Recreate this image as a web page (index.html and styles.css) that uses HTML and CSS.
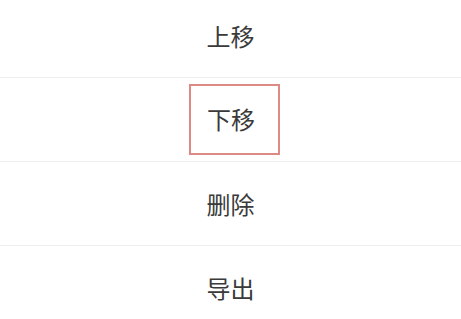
FILE: index.html
```html
<!DOCTYPE html>
<html lang="zh-CN">
<head>
<meta charset="utf-8">
<title>菜单</title>
<link rel="stylesheet" href="styles.css">
</head>
<body>
<ul class="menu">
  <li class="menu-item"><span class="label">上移</span></li>
  <li class="menu-item"><span class="label label-focus">下移</span></li>
  <li class="menu-item"><span class="label">删除</span></li>
  <li class="menu-item"><span class="label">导出</span></li>
</ul>
</body>
</html>
```

FILE: styles.css
```css
html, body {
  margin: 0;
  padding: 0;
  background: #ffffff;
  overflow: hidden;
}

.menu {
  list-style: none;
  margin: -6px 0 0 0;
  padding: 0;
  display: flex;
  flex-direction: column;
  font-family: "Noto Sans CJK SC", "Noto Sans", sans-serif;
  font-size: 24px;
  font-weight: 400;
  color: #3a3a3a;
}

.menu-item {
  height: 83px;
  display: flex;
  align-items: center;
  justify-content: center;
  border-bottom: 1px solid #efefef;
}

.label {
  line-height: 34px;
}

.label-focus {
  border: 2px solid #dd8a85;
  padding: 16px 23px 17px 16px;
  margin-left: 8px;
  line-height: 34px;
}
```
